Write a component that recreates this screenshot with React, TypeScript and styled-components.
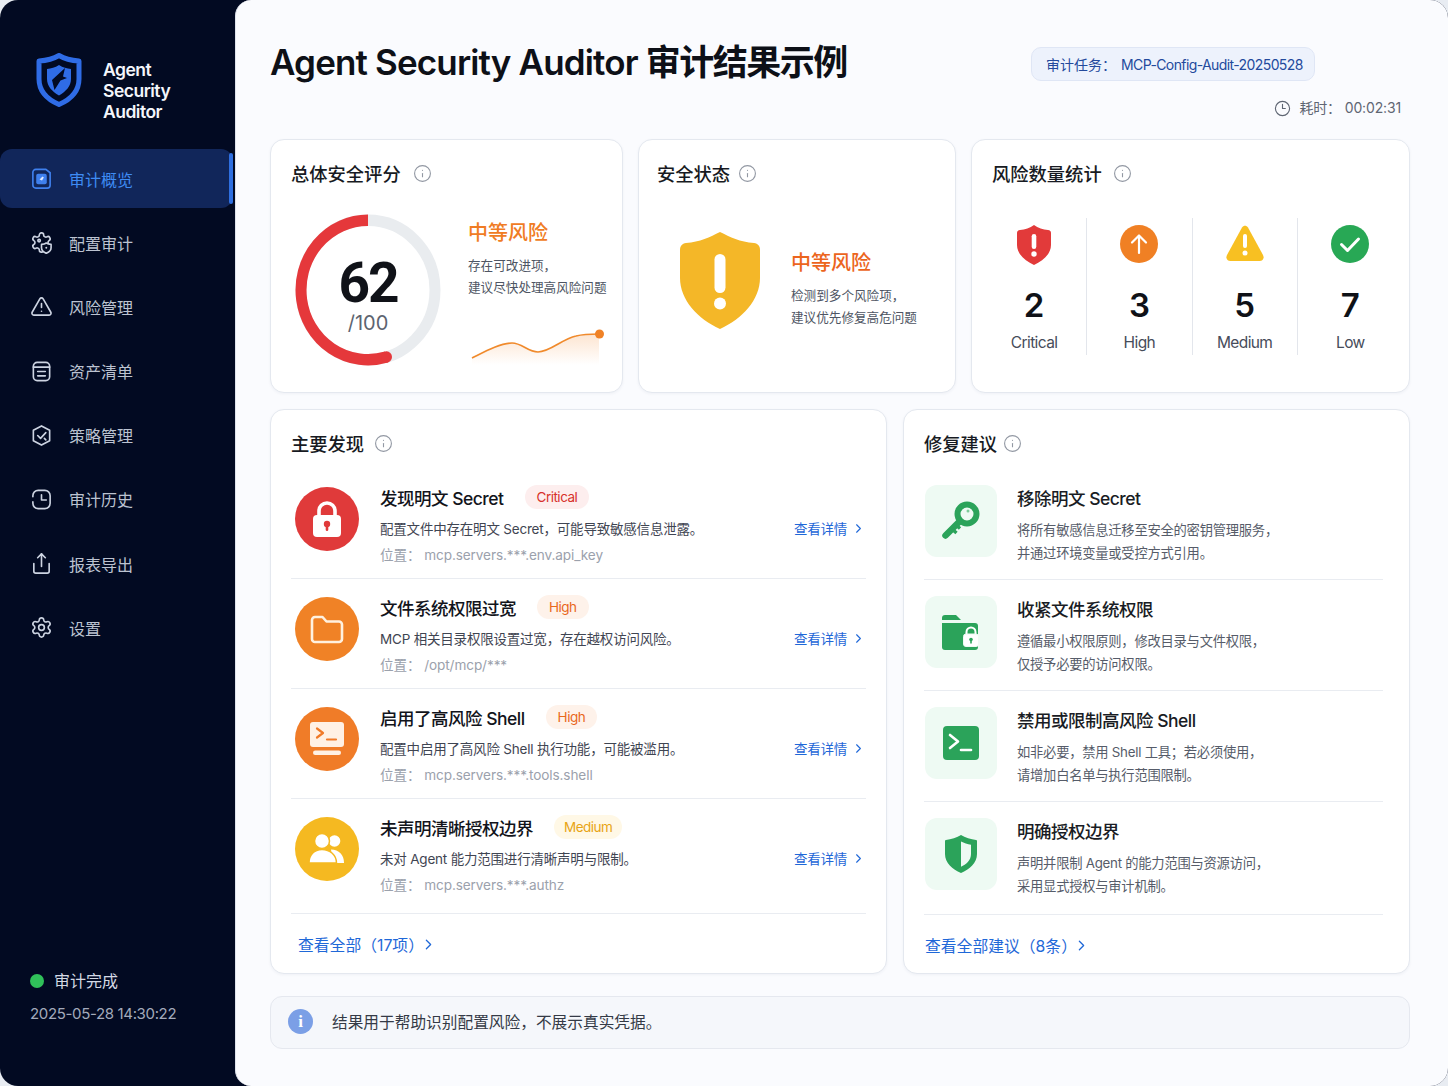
import React from 'react';
import styled, { createGlobalStyle } from 'styled-components';
import { ChevronRight, Clock3, Info, Settings, Share, TriangleAlert } from 'lucide-react';

const GlobalStyle = createGlobalStyle`
  html, body {
    margin: 0;
    padding: 0;
    background: #e8ecf2;
  }
  body {
    font-family: Inter, "Noto Sans CJK SC", sans-serif;
    color: #14171f;
  }
  * {
    box-sizing: border-box;
  }
`;

const Shell = styled.div`
  display: flex;
  width: 1448px;
  height: 1086px;
  overflow: hidden;
  background: #020a22;
  border-radius: 18px;
`;

const Sidebar = styled.aside`
  display: flex;
  flex-direction: column;
  flex: 0 0 235px;
  padding-top: 53px;
`;
const Brand = styled.div`
  display: flex;
  align-items: center;
  gap: 21px;
  height: 54px;
  margin-left: 36px;
`;
const BrandName = styled.div`
  padding-top: 20px;
  font-size: 17.5px;
  font-weight: 600;
  line-height: 21px;
  letter-spacing: -0.5px;
  color: #f4f6fb;
`;
const Nav = styled.nav`
  display: flex;
  flex-direction: column;
  gap: 5.2px;
  width: 233px;
  margin-top: 42px;
`;
const NavItem = styled.div<{ $active?: boolean }>`
  position: relative;
  display: flex;
  align-items: center;
  gap: 16px;
  height: 59px;
  padding-left: 30px;
  font-size: 16px;
  color: ${(p) => (p.$active ? '#3f8cf4' : '#bcc3d1')};
  background: ${(p) => (p.$active ? '#11265a' : 'transparent')};
  border-radius: 12px;

  svg {
    flex: none;
    width: 23px;
    height: 23px;
    color: ${(p) => (p.$active ? '#3f80ee' : '#cdd4e2')};
  }

  &::after {
    content: '';
    display: ${(p) => (p.$active ? 'block' : 'none')};
    position: absolute;
    top: 4px;
    right: 0;
    bottom: 4px;
    width: 4px;
    background: #2f6fe0;
    border-radius: 3px;
  }
`;
const SideFooter = styled.div`
  margin-top: auto;
  padding: 0 0 60px 30px;
`;
const StatusLine = styled.div`
  display: flex;
  align-items: center;
  gap: 10px;
  font-size: 16px;
  line-height: 24px;
  color: #d4d9e4;
`;
const StatusDot = styled.span`
  width: 14px;
  height: 14px;
  background: #30c15a;
  border-radius: 50%;
`;
const Stamp = styled.div`
  margin-top: 9px;
  font-size: 15px;
  line-height: 24px;
  letter-spacing: -0.35px;
  color: #a3aabb;
`;

const Main = styled.main`
  flex: 1;
  display: flex;
  flex-direction: column;
  padding: 0 38px 0 34px;
  background: #fafbfe;
  border-left: 1px solid #dfe3ec;
  border-radius: 16px 0 0 16px;
`;
const Header = styled.header`
  display: flex;
  justify-content: space-between;
  height: 139px;
`;
const Title = styled.h1`
  margin: 38px 0 0;
  font-size: 35px;
  font-weight: 600;
  line-height: 48px;
  letter-spacing: -0.85px;
  color: #0d1017;
`;
const TitleCjk = styled.span`
  letter-spacing: -1.5px;
`;
const Meta = styled.div`
  display: flex;
  flex-direction: column;
  width: 370px;
  margin-right: 9px;
  padding-top: 47px;
`;
const TaskPill = styled.div`
  align-self: flex-start;
  height: 34px;
  padding: 0 11px 0 14px;
  font-size: 14px;
  line-height: 33px;
  color: #234a9c;
  background: #edf2fc;
  border: 1px solid #dfe6f5;
  border-radius: 10px;
`;
const TaskName = styled.span`
  margin-left: 5px;
  letter-spacing: -0.6px;
`;
const Duration = styled.div`
  display: flex;
  align-items: center;
  justify-content: flex-end;
  gap: 8px;
  margin-top: 16px;
  font-size: 14px;
  line-height: 22px;
  letter-spacing: -0.15px;
  color: #5f6673;
`;

const TopRow = styled.section`
  display: grid;
  grid-template-columns: 353px 318px 439px;
  gap: 15px;
  height: 254px;
`;
const BottomRow = styled.section`
  display: grid;
  grid-template-columns: 617px 507px;
  gap: 16px;
  height: 565px;
  margin-top: 16px;
`;
const Card = styled.div`
  padding: 19px 20px 0;
  background: #fff;
  border: 1px solid #e4e8ef;
  border-radius: 14px;
  box-shadow: 0 1px 3px rgba(30, 50, 90, 0.05);
`;
const StatusCard = styled(Card)`
  padding-left: 18px;
`;
const CardHead = styled.div<{ $gap: number }>`
  display: flex;
  align-items: center;
  gap: ${(p) => p.$gap}px;
  height: 28px;
  font-size: 18.3px;
  font-weight: 500;
  color: #171a22;

  svg {
    color: #9298a3;
  }
`;

const ScoreBody = styled.div`
  display: flex;
  gap: 27px;
  margin: 27px 0 0 4px;
`;
const Gauge = styled.div`
  position: relative;
  flex: none;
  width: 146px;
  height: 152px;
`;
const GaugeLabel = styled.div`
  position: absolute;
  inset: 0;
  display: flex;
  flex-direction: column;
  align-items: center;
  padding-top: 42px;
`;
const GaugeValue = styled.div`
  font-family: Roboto, sans-serif;
  font-size: 55px;
  font-weight: 700;
  line-height: 54px;
  letter-spacing: -2px;
  color: #101218;
`;
const GaugeMax = styled.div`
  font-size: 20px;
  line-height: 26px;
  color: #5d6470;
`;
const ScoreText = styled.div`
  padding-top: 4px;
`;
const LevelText = styled.div<{ $deep?: boolean }>`
  font-size: 20px;
  font-weight: 500;
  line-height: 30px;
  color: ${(p) => (p.$deep ? '#ec651d' : '#f07c24')};
`;
const LevelNote = styled.div`
  margin-top: 7px;
  font-size: 12.6px;
  line-height: 22px;
  white-space: nowrap;
  color: #4e5563;
`;
const Spark = styled.svg`
  display: block;
  margin-top: 26px;
`;
const StatusBody = styled.div`
  display: flex;
  gap: 31px;
  margin: 45px 0 0 23px;
`;
const StatusText = styled.div`
  padding-top: 16px;
`;
const StatsGrid = styled.div`
  display: grid;
  grid-template-columns: repeat(4, 1fr);
  width: 421px;
  height: 137px;
  margin: 31px 0 0 -10px;
`;
const Stat = styled.div`
  display: flex;
  flex-direction: column;
  align-items: center;
  padding-top: 7px;
  border-right: 1px solid #e3e6ec;

  &:last-child {
    border-right: none;
  }
`;
const StatIcon = styled.div`
  height: 40px;
`;
const StatValue = styled.div`
  margin-top: 20px;
  font-size: 33px;
  font-weight: 600;
  line-height: 40px;
  color: #0f1117;
`;
const StatLabel = styled.div`
  margin-top: 6px;
  font-size: 15.5px;
  line-height: 24px;
  letter-spacing: -0.6px;
  color: #464c5a;
`;

const PanelList = styled.div`
  margin-top: 12px;
`;
const FindingRow = styled.div`
  display: flex;
  height: 110px;
  padding: 16px 0 0 4px;
  border-bottom: 1px solid #e9ecf1;

  &:last-child {
    height: 115px;
  }
`;
const RoundIcon = styled.div<{ $color: string }>`
  flex: none;
  display: flex;
  align-items: center;
  justify-content: center;
  width: 64px;
  height: 64px;
  margin: 2px 21px 0 0;
  background: ${(p) => p.$color};
  border-radius: 50%;
`;
const RowBody = styled.div`
  flex: 1;
  min-width: 0;
`;
const RowTitle = styled.div`
  display: flex;
  align-items: center;
  gap: 21px;
  height: 24px;
  font-size: 17.5px;
  font-weight: 500;
  letter-spacing: -0.5px;
  color: #12141b;
`;
const Badge = styled.span<{ $level: 'Critical' | 'High' | 'Medium' }>`
  height: 24px;
  padding: 0 ${(p) => (p.$level === 'Medium' ? 10 : 12)}px;
  font-size: 13.5px;
  font-weight: 400;
  line-height: 24px;
  letter-spacing: -0.5px;
  color: ${(p) => ({ Critical: '#d7322b', High: '#e9681c', Medium: '#e8a415' }[p.$level])};
  background: ${(p) => ({ Critical: '#fdeeee', High: '#fef2ea', Medium: '#fff8e6' }[p.$level])};
  border-radius: 12px;
`;
const RowDesc = styled.div`
  margin-top: 7px;
  font-size: 13.5px;
  line-height: 26px;
  letter-spacing: -0.2px;
  color: #3f4552;
`;
const RowPlace = styled.div`
  font-size: 13.6px;
  line-height: 26px;
  letter-spacing: -0.1px;
  color: #9ba1ac;
`;
const DetailLink = styled.a`
  flex: none;
  display: flex;
  align-items: center;
  gap: 4px;
  height: 26px;
  margin-top: 30px;
  font-size: 13.5px;
  letter-spacing: -0.25px;
  color: #1f68d8;
`;
const MoreLink = styled.a<{ $inset: number }>`
  display: flex;
  align-items: center;
  height: 22px;
  margin: 19px 0 0 ${(p) => p.$inset}px;
  font-size: 15.8px;
  color: #1f68d8;

  svg {
    margin-left: -4px;
  }
`;
const AdviceCard = styled(Card)`
  padding-right: 26px;
`;
const AdviceRow = styled.div`
  display: flex;
  gap: 20px;
  height: 111px;
  padding: 16px 1px 0;
  border-bottom: 1px solid #e9ecf1;

  &:last-child {
    height: 113px;
  }
`;
const Tile = styled.div`
  flex: none;
  display: flex;
  align-items: center;
  justify-content: center;
  width: 72px;
  height: 72px;
  background: #eefaf3;
  border-radius: 12px;
`;
const AdviceBody = styled.div`
  padding-top: 2px;
`;
const AdviceTitle = styled.div`
  font-size: 17.5px;
  font-weight: 500;
  line-height: 24px;
  letter-spacing: -0.5px;
  color: #191c24;
`;
const AdviceText = styled.div`
  margin-top: 8px;
  font-size: 13.3px;
  line-height: 23px;
  letter-spacing: -0.25px;
  color: #565c69;
`;
const Notice = styled.div`
  display: flex;
  align-items: center;
  gap: 19px;
  height: 53px;
  margin-top: 22px;
  padding: 0 0 2px 17px;
  font-size: 15.7px;
  color: #343a46;
  background: #f5f7fb;
  border: 1px solid #e5e8ef;
  border-radius: 12px;
`;
const NoticeIcon = styled.span`
  display: flex;
  align-items: center;
  justify-content: center;
  width: 25px;
  height: 25px;
  font-family: "Liberation Serif", serif;
  font-size: 17px;
  font-weight: 700;
  color: #fff;
  background: #7b9fe6;
  border-radius: 50%;
`;

const LogoMark = () => (
  <svg width="46" height="54" viewBox="0 0 46 54">
    <path d="M23 2.500C29 6 36 7.500 43 8V26C43 38 34.500 46.500 23 51.500C11.500 46.500 3 38 3 26V8C10 7.500 17 6 23 2.500Z" fill="none" stroke="#2f6ce6" strokeWidth="5" strokeLinejoin="round" />
    <path d="M23 12C27 14.500 31 15.700 35 16V26C35 33 30 38.500 23 42.500C16 38.500 11 33 11 26V16C15 15.700 19 14.500 23 12Z" fill="#2f6ce6" />
    <path d="M29 15L16 27L18.500 37L24.500 27.500L31 25L27 23.500Z" fill="#020a22" />
  </svg>
);

const OverviewIcon = () => (
  <svg viewBox="0 0 24 24" fill="none" stroke="currentColor" strokeWidth="1.700">
    <path d="M6 2.500h10.500L21 6v13a3 3 0 0 1-3 3H6a3 3 0 0 1-3-3V5.500a3 3 0 0 1 3-3Z" />
    <rect x="6.500" y="7" width="11" height="11" rx="2" fill="currentColor" stroke="none" />
    <path d="M10 13l3-3 1.500 1-2 3Z" fill="#dfe9ff" stroke="none" />
  </svg>
);
const ConfigIcon = () => (
  <svg viewBox="0 0 24 24" fill="none" stroke="currentColor" strokeWidth="1.700" strokeLinecap="round" strokeLinejoin="round">
    <path d="M12.220 2h-.44a2 2 0 0 0-2 2v.18a2 2 0 0 1-1 1.730l-.43.25a2 2 0 0 1-2 0l-.15-.08a2 2 0 0 0-2.730.73l-.22.38a2 2 0 0 0 .73 2.730l.15.1a2 2 0 0 1 1 1.720v.51a2 2 0 0 1-1 1.740l-.15.09a2 2 0 0 0-.73 2.730l.22.38a2 2 0 0 0 2.730.73l.15-.08a2 2 0 0 1 2 0l.43.25a2 2 0 0 1 1 1.730V20a2 2 0 0 0 2 2h.44a2 2 0 0 0 2-2v-.18a2 2 0 0 1 1-1.730l.43-.25a2 2 0 0 1 2 0l.15.08a2 2 0 0 0 2.730-.73l.22-.39a2 2 0 0 0-.73-2.730l-.15-.08a2 2 0 0 1-1-1.740v-.5a2 2 0 0 1 1-1.740l.15-.09a2 2 0 0 0 .73-2.730l-.22-.38a2 2 0 0 0-2.730-.73l-.15.08a2 2 0 0 1-2 0l-.43-.25a2 2 0 0 1-1-1.730V4a2 2 0 0 0-2-2z" />
    <path d="M17 12.500c1.400 1 2.800 1.400 5 1.500v3.500c0 2.700-2.100 4.600-5 5.800-2.900-1.200-5-3.100-5-5.800V14c2.200-.1 3.600-.5 5-1.500Z" fill="#020a22" />
    <circle cx="17" cy="17.500" r="1" fill="currentColor" stroke="none" />
    <circle cx="9.500" cy="10" r="1.300" />
  </svg>
);
const InventoryIcon = () => (
  <svg viewBox="0 0 24 24" fill="none" stroke="currentColor" strokeWidth="1.700" strokeLinecap="round">
    <rect x="3.500" y="2.500" width="17" height="19" rx="4" />
    <path d="M3.500 7.500h17M8 12h8M8 16.500h8" />
  </svg>
);
const PolicyIcon = () => (
  <svg viewBox="0 0 24 24" fill="none" stroke="currentColor" strokeWidth="1.700" strokeLinecap="round" strokeLinejoin="round">
    <path d="M12 2l8.500 4.500v11L12 22l-8.500-4.500v-11Z" />
    <path d="M8 12l3 3 5.500-6M15 15l1.500 1.500" />
  </svg>
);
const HistoryIcon = () => (
  <svg viewBox="0 0 24 24" fill="none" stroke="currentColor" strokeWidth="1.700" strokeLinecap="round" strokeLinejoin="round">
    <path d="M3 9V8a5.500 5.500 0 0 1 5.500-5.500h7A5.500 5.500 0 0 1 21 8v8a5.500 5.500 0 0 1-5.500 5.500h-7A5.500 5.500 0 0 1 3 16v-1.500" />
    <path d="M12 7v5.500h5" />
  </svg>
);
const InfoMark = () => <Info size={19} strokeWidth={1.400} />;

// the reference ring is a little taller than wide, so the drawing is stretched
const Ring = () => (
  <svg width="146" height="152" viewBox="0 0 146 146" preserveAspectRatio="none">
    <circle cx="73" cy="73" r="67" fill="none" stroke="#e9ecef" strokeWidth="11" />
    <path d="M73 6A67 67 0 1 0 91.500 137.400" fill="none" stroke="#e5383b" strokeWidth="11" />
    <circle cx="91.500" cy="137.400" r="5.500" fill="#e5383b" />
  </svg>
);

const Sparkline = () => (
  <Spark width="140" height="40" viewBox="0 0 140 40">
    <defs>
      <linearGradient id="sparkFill" x1="0" y1="0" x2="0" y2="1">
        <stop offset="0" stopColor="#f59a4c" stopOpacity="0.26" />
        <stop offset="1" stopColor="#f59a4c" stopOpacity="0" />
      </linearGradient>
    </defs>
    <path d="M4 33C16 27 32 18 44 18C54 18 60 27 70 27C82 27 94 14 108 11C116 9 124 9 131 9V40H4Z" fill="url(#sparkFill)" />
    <path d="M4 33C16 27 32 18 44 18C54 18 60 27 70 27C82 27 94 14 108 11C116 9 124 9 131 9" fill="none" stroke="#f08a2c" strokeWidth="1.700" />
    <circle cx="131.500" cy="9" r="4.500" fill="#f08226" />
  </Spark>
);

const BigShield = () => (
  <svg width="80" height="97" viewBox="0 0 80 97">
    <path d="M40 0C50 5 60 10 74 11C78 11.500 80 14 80 18V46C80 68 62 87 40 97C18 87 0 68 0 46V18C0 14 2 11.500 6 11C20 10 30 5 40 0Z" fill="#f4b728" />
    <rect x="34.500" y="22" width="11" height="39" rx="5.500" fill="#fff" />
    <circle cx="40" cy="71.500" r="6" fill="#fff" />
  </svg>
);

const CriticalIcon = () => (
  <svg width="34" height="40" viewBox="0 0 34 40">
    <path d="M17 0C21 3 26 4.500 31 5C33 5.200 34 6.200 34 8V20C34 29 26 36 17 40C8 36 0 29 0 20V8C0 6.200 1 5.200 3 5C8 4.500 13 3 17 0Z" fill="#e23a3a" />
    <rect x="14.700" y="9" width="4.600" height="15" rx="2.300" fill="#fff" />
    <circle cx="17" cy="29" r="2.700" fill="#fff" />
  </svg>
);
const HighIcon = () => (
  <svg width="38" height="38" viewBox="0 0 38 38">
    <circle cx="19" cy="19" r="19" fill="#f08024" />
    <path d="M19 28V11M12 17.500L19 10.500L26 17.500" fill="none" stroke="#fff" strokeWidth="2.200" strokeLinecap="round" strokeLinejoin="round" />
  </svg>
);
const MediumIcon = () => (
  <svg width="38" height="36" viewBox="0 0 38 36">
    <path d="M16 2.500C17.500 0 20.500 0 22 2.500L37 30C38.500 33 37 36 33.500 36H4.500C1 36 -0.500 33 1 30Z" fill="#f8c022" />
    <rect x="17" y="9" width="4" height="14" rx="2" fill="#fff" />
    <circle cx="19" cy="28" r="2.500" fill="#fff" />
  </svg>
);
const LowIcon = () => (
  <svg width="38" height="38" viewBox="0 0 38 38">
    <circle cx="19" cy="19" r="19" fill="#28a855" />
    <path d="M10.500 19.500L16.500 25.500L27.500 14" fill="none" stroke="#fff" strokeWidth="3" strokeLinecap="round" strokeLinejoin="round" />
  </svg>
);

const LockGlyph = () => (
  <svg width="28" height="36" viewBox="0 0 28 36">
    <path d="M6 16V10a8 8 0 0 1 16 0v6" fill="none" stroke="#fff" strokeWidth="3.600" />
    <rect x="0" y="14" width="28" height="22" rx="4" fill="#fff" />
    <circle cx="14" cy="23" r="3.200" fill="#e03a3a" />
    <rect x="12.700" y="24" width="2.600" height="6" rx="1.300" fill="#e03a3a" />
  </svg>
);
const FolderGlyph = () => (
  <svg width="34" height="30" viewBox="0 0 34 30">
    <path d="M2 6a3 3 0 0 1 3-3h7.500l4 4.500H29a3 3 0 0 1 3 3V25a3 3 0 0 1-3 3H5a3 3 0 0 1-3-3Z" fill="none" stroke="#fff1df" strokeWidth="2.600" strokeLinejoin="round" />
  </svg>
);
const ScreenGlyph = () => (
  <svg width="34" height="34" viewBox="0 0 34 34">
    <rect x="0" y="0" width="34" height="25" rx="3" fill="#fff1e4" />
    <path d="M7 6.500L13 11L7 15.500" fill="none" stroke="#f07a28" strokeWidth="2.200" strokeLinecap="round" strokeLinejoin="round" />
    <path d="M17 17.500H26" stroke="#f07a28" strokeWidth="2.200" strokeLinecap="round" />
    <rect x="3" y="28.500" width="28" height="4.500" rx="2.200" fill="#fff1e4" />
  </svg>
);
const UsersGlyph = () => (
  <svg width="36" height="30" viewBox="0 0 36 30">
    <circle cx="25.500" cy="7" r="5.800" fill="#fff" />
    <path d="M22 15.500C30 15.500 35 21 35 29H24Z" fill="#fff" />
    <circle cx="13" cy="7" r="7.500" fill="#fff" stroke="#f5b921" strokeWidth="1.500" />
    <path d="M0 29C0 21 5 15.500 13 15.500S27.500 21 27.500 29Z" fill="#fff" stroke="#f5b921" strokeWidth="1.500" />
  </svg>
);
const KeyGlyph = () => (
  <svg width="38" height="40" viewBox="0 0 38 40">
    <circle cx="25" cy="13" r="9.500" fill="none" stroke="#2ba35a" strokeWidth="6" />
    <circle cx="26" cy="10" r="1.500" fill="#7ecb9a" />
    <path d="M18 20L3.500 34.500" stroke="#2ba35a" strokeWidth="6.500" strokeLinecap="round" />
    <path d="M10 28l4.500 4M14 24l4 3.500" stroke="#2ba35a" strokeWidth="3.400" />
  </svg>
);
const FolderLockGlyph = () => (
  <svg width="38" height="36" viewBox="0 0 38 36">
    <path d="M0 4a3 3 0 0 1 3-3h11l5 5H0Z" fill="#2ba35a" />
    <path d="M0 9h33a3 3 0 0 1 3 3v21a3 3 0 0 1-3 3H3a3 3 0 0 1-3-3Z" fill="#2ba35a" />
    <path d="M24.500 21v-3a4.500 4.500 0 0 1 9 0v3" fill="none" stroke="#fff" strokeWidth="2" />
    <rect x="21.500" y="20" width="15" height="12.500" rx="2.500" fill="#fff" stroke="#eefaf3" strokeWidth="1" />
    <circle cx="29" cy="25.500" r="1.800" fill="#2ba35a" />
    <rect x="28.200" y="26" width="1.600" height="3.500" fill="#2ba35a" />
  </svg>
);
const PromptGlyph = () => (
  <svg width="36" height="34" viewBox="0 0 36 34">
    <rect width="36" height="34" rx="4" fill="#2ba35a" />
    <path d="M7 9L15 15.500L7 22" fill="none" stroke="#fff" strokeWidth="2.600" strokeLinecap="round" strokeLinejoin="round" />
    <path d="M18 24H28" stroke="#fff" strokeWidth="2.600" strokeLinecap="round" />
  </svg>
);
const HalfShieldGlyph = () => (
  <svg width="32" height="38" viewBox="0 0 32 38">
    <path d="M16 0C20 2.500 26 4.500 31 5C31.700 5.100 32 5.500 32 6V19C32 28 24.500 34.500 16 38C7.500 34.500 0 28 0 19V6C0 5.500 .3 5.100 1 5C6 4.500 12 2.500 16 0Z" fill="#2ba35a" />
    <path d="M16 6.500C19 8 22.500 9.300 26 9.800V19C26 25.500 21 29.500 16 31.800Z" fill="#eefaf3" />
  </svg>
);

const navItems: { label: string; icon: React.ReactNode; active?: boolean }[] = [
  { label: '审计概览', icon: <OverviewIcon />, active: true },
  { label: '配置审计', icon: <ConfigIcon /> },
  { label: '风险管理', icon: <TriangleAlert strokeWidth={1.700} /> },
  { label: '资产清单', icon: <InventoryIcon /> },
  { label: '策略管理', icon: <PolicyIcon /> },
  { label: '审计历史', icon: <HistoryIcon /> },
  { label: '报表导出', icon: <Share strokeWidth={1.700} /> },
  { label: '设置', icon: <Settings strokeWidth={1.700} /> },
];

const stats = [
  { icon: <CriticalIcon />, value: 2, label: 'Critical' },
  { icon: <HighIcon />, value: 3, label: 'High' },
  { icon: <MediumIcon />, value: 5, label: 'Medium' },
  { icon: <LowIcon />, value: 7, label: 'Low' },
];

const findings: {
  title: string;
  level: 'Critical' | 'High' | 'Medium';
  desc: string;
  place: string;
  color: string;
  icon: React.ReactNode;
}[] = [
  {
    title: '发现明文 Secret',
    level: 'Critical',
    desc: '配置文件中存在明文 Secret，可能导致敏感信息泄露。',
    place: '位置： mcp.servers.***.env.api_key',
    color: '#e03a3a',
    icon: <LockGlyph />,
  },
  {
    title: '文件系统权限过宽',
    level: 'High',
    desc: 'MCP 相关目录权限设置过宽，存在越权访问风险。',
    place: '位置： /opt/mcp/***',
    color: '#f08226',
    icon: <FolderGlyph />,
  },
  {
    title: '启用了高风险 Shell',
    level: 'High',
    desc: '配置中启用了高风险 Shell 执行功能，可能被滥用。',
    place: '位置： mcp.servers.***.tools.shell',
    color: '#f07c28',
    icon: <ScreenGlyph />,
  },
  {
    title: '未声明清晰授权边界',
    level: 'Medium',
    desc: '未对 Agent 能力范围进行清晰声明与限制。',
    place: '位置： mcp.servers.***.authz',
    color: '#f5b921',
    icon: <UsersGlyph />,
  },
];

const advice = [
  {
    title: '移除明文 Secret',
    lines: ['将所有敏感信息迁移至安全的密钥管理服务，', '并通过环境变量或受控方式引用。'],
    icon: <KeyGlyph />,
  },
  {
    title: '收紧文件系统权限',
    lines: ['遵循最小权限原则，修改目录与文件权限，', '仅授予必要的访问权限。'],
    icon: <FolderLockGlyph />,
  },
  {
    title: '禁用或限制高风险 Shell',
    lines: ['如非必要，禁用 Shell 工具；若必须使用，', '请增加白名单与执行范围限制。'],
    icon: <PromptGlyph />,
  },
  {
    title: '明确授权边界',
    lines: ['声明并限制 Agent 的能力范围与资源访问，', '采用显式授权与审计机制。'],
    icon: <HalfShieldGlyph />,
  },
];

function App() {
  return (
    <Shell>
      <GlobalStyle />
      <Sidebar>
        <Brand>
          <LogoMark />
          <BrandName>
            Agent
            <br />
            Security
            <br />
            Auditor
          </BrandName>
        </Brand>
        <Nav>
          {navItems.map((item) => (
            <NavItem key={item.label} $active={item.active}>
              {item.icon}
              {item.label}
            </NavItem>
          ))}
        </Nav>
        <SideFooter>
          <StatusLine>
            <StatusDot />
            审计完成
          </StatusLine>
          <Stamp>2025-05-28 14:30:22</Stamp>
        </SideFooter>
      </Sidebar>
      <Main>
        <Header>
          <Title>
            Agent Security Auditor <TitleCjk>审计结果示例</TitleCjk>
          </Title>
          <Meta>
            <TaskPill>
              审计任务：
              <TaskName>MCP-Config-Audit-20250528</TaskName>
            </TaskPill>
            <Duration>
              <Clock3 size={17} strokeWidth={1.600} />
              耗时： 00:02:31
            </Duration>
          </Meta>
        </Header>
        <TopRow>
          <Card>
            <CardHead $gap={12}>
              总体安全评分
              <InfoMark />
            </CardHead>
            <ScoreBody>
              <Gauge>
                <Ring />
                <GaugeLabel>
                  <GaugeValue>62</GaugeValue>
                  <GaugeMax>/100</GaugeMax>
                </GaugeLabel>
              </Gauge>
              <ScoreText>
                <LevelText>中等风险</LevelText>
                <LevelNote>
                  存在可改进项，
                  <br />
                  建议尽快处理高风险问题
                </LevelNote>
                <Sparkline />
              </ScoreText>
            </ScoreBody>
          </Card>
          <StatusCard>
            <CardHead $gap={8}>
              安全状态
              <InfoMark />
            </CardHead>
            <StatusBody>
              <BigShield />
              <StatusText>
                <LevelText $deep>中等风险</LevelText>
                <LevelNote>
                  检测到多个风险项，
                  <br />
                  建议优先修复高危问题
                </LevelNote>
              </StatusText>
            </StatusBody>
          </StatusCard>
          <Card>
            <CardHead $gap={11}>
              风险数量统计
              <InfoMark />
            </CardHead>
            <StatsGrid>
              {stats.map((s) => (
                <Stat key={s.label}>
                  <StatIcon>{s.icon}</StatIcon>
                  <StatValue>{s.value}</StatValue>
                  <StatLabel>{s.label}</StatLabel>
                </Stat>
              ))}
            </StatsGrid>
          </Card>
        </TopRow>
        <BottomRow>
          <Card>
            <CardHead $gap={10}>
              主要发现
              <InfoMark />
            </CardHead>
            <PanelList>
              {findings.map((f) => (
                <FindingRow key={f.title}>
                  <RoundIcon $color={f.color}>{f.icon}</RoundIcon>
                  <RowBody>
                    <RowTitle>
                      {f.title}
                      <Badge $level={f.level}>{f.level}</Badge>
                    </RowTitle>
                    <RowDesc>{f.desc}</RowDesc>
                    <RowPlace>{f.place}</RowPlace>
                  </RowBody>
                  <DetailLink>
                    查看详情
                    <ChevronRight size={15} strokeWidth={1.800} />
                  </DetailLink>
                </FindingRow>
              ))}
            </PanelList>
            <MoreLink $inset={7}>
              查看全部（17项）
              <ChevronRight size={17} strokeWidth={1.800} />
            </MoreLink>
          </Card>
          <AdviceCard>
            <CardHead $gap={6}>
              修复建议
              <InfoMark />
            </CardHead>
            <PanelList>
              {advice.map((a) => (
                <AdviceRow key={a.title}>
                  <Tile>{a.icon}</Tile>
                  <AdviceBody>
                    <AdviceTitle>{a.title}</AdviceTitle>
                    <AdviceText>
                      {a.lines[0]}
                      <br />
                      {a.lines[1]}
                    </AdviceText>
                  </AdviceBody>
                </AdviceRow>
              ))}
            </PanelList>
            <MoreLink $inset={1}>
              查看全部建议（8条）
              <ChevronRight size={17} strokeWidth={1.800} />
            </MoreLink>
          </AdviceCard>
        </BottomRow>
        <Notice>
          <NoticeIcon>i</NoticeIcon>
          结果用于帮助识别配置风险，不展示真实凭据。
        </Notice>
      </Main>
    </Shell>
  );
}

export default App;
